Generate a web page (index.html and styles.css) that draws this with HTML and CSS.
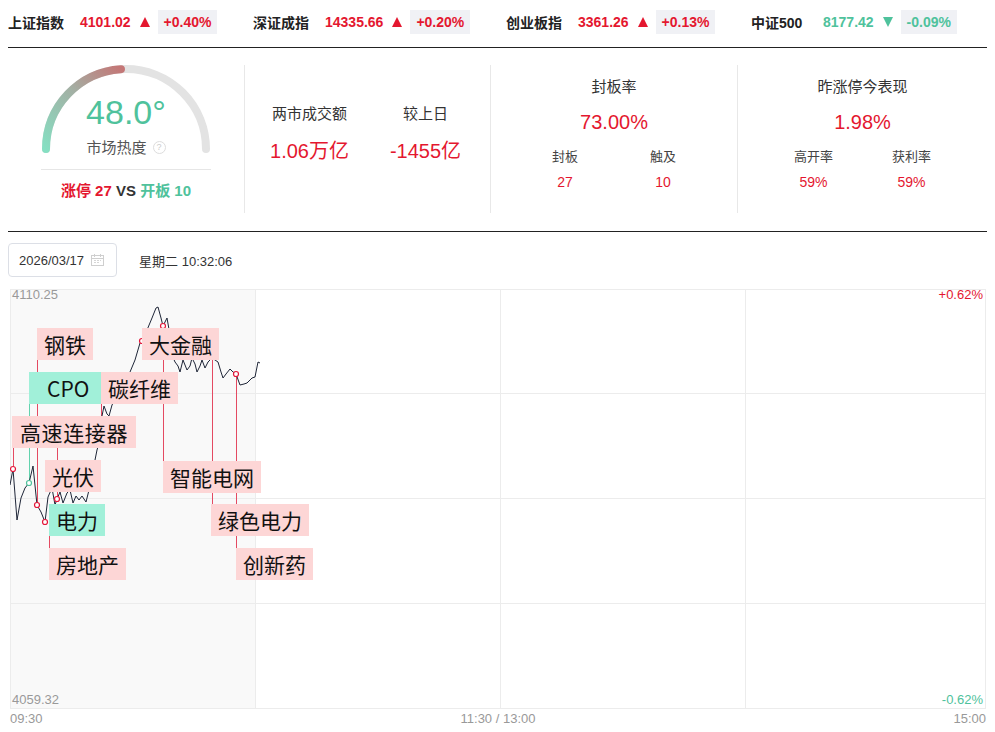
FILE: index.html
```html
<!DOCTYPE html>
<html>
<head>
	<title>大盘温度|市场情绪</title>
	<meta charset="utf-8">
	<link rel="stylesheet" href="styles.css">
</head>
<body>
<!-- 指数条 -->
<div class="indexBar">
	<div class="indexItem">
		<span class="indexName">上证指数</span>
		<span class="red">4101.02</span>
		<i class="arrowUp"></i>
		<span class="indexRate red">+0.40%</span>
	</div>
	<div class="indexItem">
		<span class="indexName">深证成指</span>
		<span class="red">14335.66</span>
		<i class="arrowUp"></i>
		<span class="indexRate red">+0.20%</span>
	</div>
	<div class="indexItem">
		<span class="indexName">创业板指</span>
		<span class="red">3361.26</span>
		<i class="arrowUp"></i>
		<span class="indexRate red">+0.13%</span>
	</div>
	<div class="indexItem">
		<span class="indexName">中证500</span>
		<span class="green">8177.42</span>
		<i class="arrowDown"></i>
		<span class="indexRate green">-0.09%</span>
	</div>
</div>

<!-- 情绪面板 -->
<div class="statPanel">
	<div class="statCol heatCol">
		<div class="gauge">
			<svg class="gaugeArc" width="180" height="92" viewBox="0 0 180 92">
				<defs>
					<linearGradient id="heatGrad" gradientUnits="userSpaceOnUse" x1="10" y1="84" x2="86" y2="4">
						<stop offset="0" stop-color="#86dfc2"/>
						<stop offset="0.55" stop-color="#a3b0a4"/>
						<stop offset="1" stop-color="#c47676"/>
					</linearGradient>
				</defs>
				<path d="M10 84 A80 80 0 0 1 170 84" fill="none" stroke="#e3e3e3" stroke-width="8" stroke-linecap="round"/>
				<path d="M10 84 A80 80 0 0 1 84.98 4.16" fill="none" stroke="url(#heatGrad)" stroke-width="8" stroke-linecap="round"/>
			</svg>
			<div class="temp">48.0°</div>
			<div class="heatLabel">市场热度<span class="help">?</span></div>
		</div>
		<div class="vsLine"><span class="red">涨停 27</span> VS <span class="green">开板 10</span></div>
	</div>

	<div class="statCol">
		<div class="pair">
			<div>
				<p class="label">两市成交额</p>
				<p class="value red">1.06万亿</p>
			</div>
			<div>
				<p class="label">较上日</p>
				<p class="value red">-1455亿</p>
			</div>
		</div>
	</div>

	<div class="statCol">
		<p class="label">封板率</p>
		<p class="value red">73.00%</p>
		<div class="pair subPair">
			<div>
				<p class="subLabel">封板</p>
				<p class="subValue red">27</p>
			</div>
			<div>
				<p class="subLabel">触及</p>
				<p class="subValue red">10</p>
			</div>
		</div>
	</div>

	<div class="statCol lastCol">
		<p class="label">昨涨停今表现</p>
		<p class="value red">1.98%</p>
		<div class="pair subPair">
			<div>
				<p class="subLabel">高开率</p>
				<p class="subValue red">59%</p>
			</div>
			<div>
				<p class="subLabel">获利率</p>
				<p class="subValue red">59%</p>
			</div>
		</div>
	</div>
</div>

<!-- 日期 -->
<div class="dateBar">
	<div class="datePicker">
		<span>2026/03/17</span>
		<svg class="calIcon" width="13" height="12" viewBox="0 0 13 12">
			<rect x="0.5" y="1.5" width="12" height="10" fill="none" stroke="#cfcfcf"/>
			<line x1="0.5" y1="4.5" x2="12.5" y2="4.5" stroke="#cfcfcf"/>
			<line x1="3.5" y1="0" x2="3.5" y2="3" stroke="#cfcfcf"/>
			<line x1="9.5" y1="0" x2="9.5" y2="3" stroke="#cfcfcf"/>
			<rect x="3" y="6" width="2" height="1" fill="#d6d6d6"/>
			<rect x="6" y="6" width="2" height="1" fill="#d6d6d6"/>
			<rect x="9" y="6" width="1" height="1" fill="#d6d6d6"/>
			<rect x="3" y="8" width="2" height="1" fill="#d6d6d6"/>
			<rect x="6" y="8" width="2" height="1" fill="#d6d6d6"/>
		</svg>
	</div>
	<span class="weekTime">星期二 10:32:06</span>
</div>

<!-- 分时图 -->
<div class="chart">
	<svg width="976" height="421" viewBox="0 0 976 421" shape-rendering="crispEdges">
		<rect x="0" y="1" width="245" height="419" fill="#f9f9f9"/>
		<g stroke="#ececec" stroke-width="1">
			<line x1="0" y1="1.5" x2="976" y2="1.5"/>
			<line x1="0" y1="105.5" x2="976" y2="105.5"/>
			<line x1="0" y1="210.5" x2="976" y2="210.5"/>
			<line x1="0" y1="315.5" x2="976" y2="315.5"/>
			<line x1="0" y1="420.5" x2="976" y2="420.5"/>
			<line x1="0.5" y1="1" x2="0.5" y2="421"/>
			<line x1="245.5" y1="1" x2="245.5" y2="421"/>
			<line x1="490.5" y1="1" x2="490.5" y2="421"/>
			<line x1="735.5" y1="1" x2="735.5" y2="421"/>
			<line x1="975.5" y1="1" x2="975.5" y2="421"/>
		</g>
		<g stroke="#e44a62" stroke-width="1">
			<line x1="3.5" y1="160" x2="3.5" y2="181"/>
			<line x1="27.5" y1="72" x2="27.5" y2="217"/>
			<line x1="39.5" y1="228" x2="39.5" y2="260"/>
			<line x1="47.5" y1="160" x2="47.5" y2="211"/>
			<line x1="91.5" y1="115" x2="91.5" y2="140"/>
			<line x1="153.5" y1="38" x2="153.5" y2="173"/>
			<line x1="202.5" y1="60" x2="202.5" y2="216"/>
			<line x1="226.5" y1="86" x2="226.5" y2="260"/>
		</g>
		<line x1="19.5" y1="115" x2="19.5" y2="195" stroke="#62d2ad"/>
		<polyline fill="none" stroke="#1f2638" stroke-width="1" shape-rendering="auto" points="0,197 3,181 7,232 11,210 15,200 19,195 23,178 27,217 31,224 35,234 38,209 42,200 45,217 47,211 50,204 53,215 57,205 60,202 63,215 66,208 69,212 72,208 76,214 79,202 83,182 87,162 90,152 92,128 94,118 97,126 99,128 102,117 106,110 110,104 115,97 120,84 125,72 130,55 132,53 137,42 142,30 146,20 148,19 151,30 153,38 155,34 157,30 160,47 162,67 165,74 168,78 170,84 173,72 177,82 180,78 182,70 185,76 187,84 190,78 192,72 195,80 198,74 202,70 205,72 208,74 211,84 213,90 216,86 220,81 223,84 226,86 230,97 234,96 237,95 240,92 242,90 245,89 248,74 250,75"/>
		<g fill="#fff" stroke="#e4173a" stroke-width="1.2" shape-rendering="auto">
			<circle cx="3" cy="181" r="2.5"/>
			<circle cx="27" cy="217" r="2.5"/>
			<circle cx="35" cy="234" r="2.5"/>
			<circle cx="47" cy="211" r="2.5"/>
			<circle cx="132" cy="53" r="2.5"/>
			<circle cx="153" cy="38" r="2.5"/>
			<circle cx="226" cy="86" r="2.5"/>
		</g>
		<circle cx="19" cy="195" r="2.5" fill="#fff" stroke="#4fc29c" stroke-width="1.2" shape-rendering="auto"/>
	</svg>

	<span class="axisText topLeft">4110.25</span>
	<span class="axisText topRight red">+0.62%</span>
	<span class="axisText bottomLeft">4059.32</span>
	<span class="axisText bottomRight green">-0.62%</span>

	<span class="tag" style="left:27px;top:40px">钢铁</span>
	<span class="tag" style="left:132px;top:40px">大金融</span>
	<span class="tag green cpo" style="left:19px;top:84px">CPO</span>
	<span class="tag" style="left:91px;top:84px">碳纤维</span>
	<span class="tag wideTag" style="left:2px;top:128px">高速连接器</span>
	<span class="tag" style="left:35px;top:172px">光伏</span>
	<span class="tag" style="left:153px;top:173px">智能电网</span>
	<span class="tag green" style="left:39px;top:216px">电力</span>
	<span class="tag" style="left:201px;top:216px">绿色电力</span>
	<span class="tag" style="left:39px;top:260px">房地产</span>
	<span class="tag" style="left:226px;top:260px">创新药</span>
</div>
<div class="timeAxis">
	<span>09:30</span>
	<span>11:30 / 13:00</span>
	<span>15:00</span>
</div>
</body>
</html>
```

FILE: styles.css
```css
html,body{
	padding: 0;
	margin: 0;
}

body{
	margin: 0 8px;
	background-color: #fff;
	color: #333;
	font-family: "Liberation Sans", "Noto Sans CJK SC", sans-serif;
}

p{
	margin: 0;
}

.red{
	color: #e4172f;
}
.green{
	color: #4fc29c;
}

/* 指数条 */
.indexBar{
	display: grid;
	grid-template-columns: 245px 253px 245px 1fr;
	padding: 10px 0 13px;
	border-bottom: 1px solid #222;
}
.indexItem{
	display: flex;
	align-items: center;
	height: 24px;
	font-size: 14px;
	font-weight: bold;
}
.indexName{
	width: 72px;
	color: #222;
}
.arrowUp , .arrowDown{
	width: 0;
	height: 0;
	margin: 0 8px 0 9px;
	border-left: 5.5px solid transparent;
	border-right: 5.5px solid transparent;
}
.arrowUp{
	border-bottom: 10px solid #e4172f;
}
.arrowDown{
	border-top: 10px solid #4fc29c;
}
.indexRate{
	background-color: #f0f1f5;
	padding: 0 6px;
	line-height: 24px;
}

/* 情绪面板 */
.statPanel{
	display: grid;
	grid-template-columns: 237px 246px 247px 1fr;
	padding: 17px 0 18px;
	border-bottom: 1px solid #222;
}
.statCol{
	box-sizing: border-box;
	height: 148px;
	border-right: 1px solid #e8e8e8;
	display: flex;
	flex-direction: column;
	justify-content: center;
	padding-bottom: 10px;
	text-align: center;
}
.lastCol{
	border-right: none;
}
.heatCol{
	justify-content: flex-start;
	padding-bottom: 0;
}

.gauge{
	position: relative;
	width: 170px;
	height: 76px;
	margin: 0 auto;
	padding-top: 28px;
	border-bottom: 1px solid #e6e6e6;
}
.gaugeArc{
	position: absolute;
	left: -5px;
	top: 0;
}
.temp{
	position: relative;
	font-size: 34px;
	line-height: 38px;
	color: #4fc29c;
}
.heatLabel{
	position: relative;
	margin-top: 7px;
	font-size: 15px;
	line-height: 20px;
	color: #555;
}
.help{
	display: inline-block;
	vertical-align: middle;
	box-sizing: border-box;
	width: 13px;
	height: 13px;
	margin: -3px 0 0 6px;
	border: 1px solid #ddd;
	border-radius: 50%;
	font-size: 9px;
	line-height: 11px;
	color: #ccc;
}
.vsLine{
	margin-top: 11px;
	font-size: 15px;
	line-height: 20px;
	font-weight: bold;
	color: #333;
}

.label{
	font-size: 15px;
	line-height: 20px;
	color: #333;
}
.value{
	margin-top: 12px;
	font-size: 20px;
	line-height: 26px;
}
.pair{
	display: flex;
	justify-content: center;
}
.pair>div{
	width: 116px;
}
.pair .value{
	margin-top: 14px;
}
.subPair{
	margin-top: 13px;
}
.subPair>div{
	width: 98px;
}
.subLabel{
	font-size: 13px;
	line-height: 18px;
	color: #444;
}
.subValue{
	margin-top: 7px;
	font-size: 14px;
	line-height: 18px;
}

/* 日期 */
.dateBar{
	display: flex;
	align-items: center;
	margin-top: 11px;
	font-size: 13px;
}
.datePicker{
	display: flex;
	align-items: center;
	box-sizing: border-box;
	height: 34px;
	padding: 0 12px 0 10px;
	border: 1px solid #dcdfe6;
	border-radius: 4px;
	color: #333;
}
.calIcon{
	margin-left: 7px;
}
.weekTime{
	margin-left: 22px;
	color: #333;
}

/* 分时图 */
.chart{
	position: relative;
	width: 976px;
	height: 421px;
	margin: 11px 0 0 2px;
}
.chart svg{
	display: block;
}
.axisText{
	position: absolute;
	font-size: 13px;
	line-height: 14px;
	color: #999;
}
.topLeft{
	left: 2px;
	top: 0;
}
.topRight{
	right: 3px;
	top: 0;
	color: #e4172f;
}
.bottomLeft{
	left: 2px;
	top: 405px;
}
.bottomRight{
	right: 3px;
	top: 405px;
	color: #4fc29c;
}

.tag{
	position: absolute;
	height: 32px;
	line-height: 32px;
	padding: 0 7px;
	background-color: #fdd6d6;
	font-family: "Noto Sans CJK SC", sans-serif;
	font-size: 21px;
	color: #111;
	white-space: nowrap;
}
.tag.green{
	background-color: #a1f0d9;
	color: #111;
}
.tag.cpo{
	box-sizing: border-box;
	width: 72px;
	padding: 0 0 0 18px;
}
.tag.wideTag{
	padding: 0 8px;
	letter-spacing: 0.6px;
}

.timeAxis{
	display: flex;
	justify-content: space-between;
	width: 976px;
	margin-left: 2px;
	font-size: 13px;
	line-height: 20px;
	color: #999;
}
```
